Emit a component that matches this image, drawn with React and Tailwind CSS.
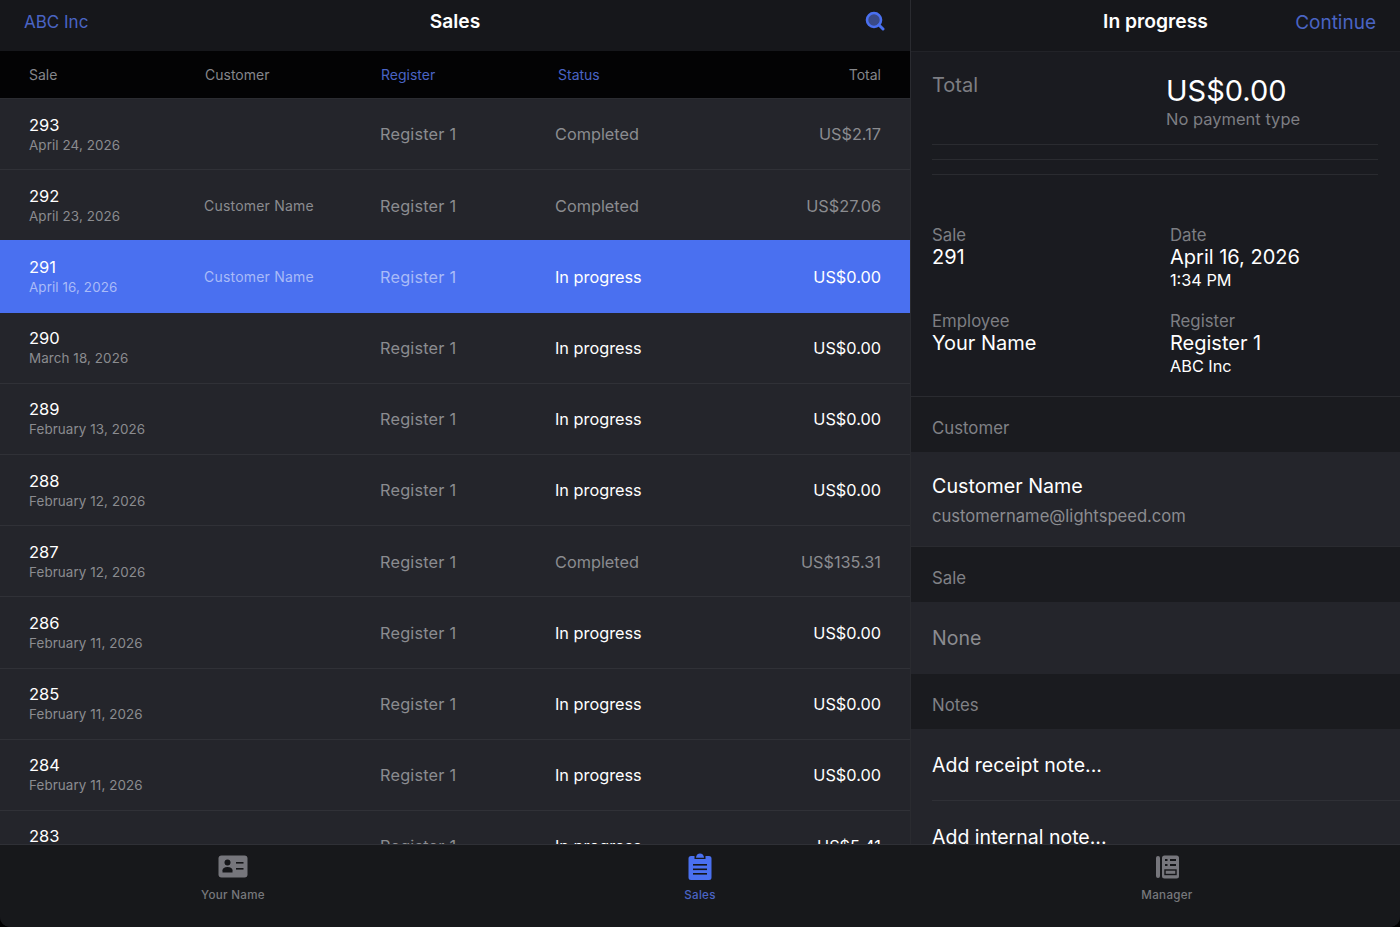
import React from 'react';

const sales = [
  { id: 293, date: 'April 24, 2026', customer: '', status: 'Completed', total: 'US$2.17' },
  { id: 292, date: 'April 23, 2026', customer: 'Customer Name', status: 'Completed', total: 'US$27.06' },
  { id: 291, date: 'April 16, 2026', customer: 'Customer Name', status: 'In progress', total: 'US$0.00', selected: true },
  { id: 290, date: 'March 18, 2026', customer: '', status: 'In progress', total: 'US$0.00' },
  { id: 289, date: 'February 13, 2026', customer: '', status: 'In progress', total: 'US$0.00' },
  { id: 288, date: 'February 12, 2026', customer: '', status: 'In progress', total: 'US$0.00' },
  { id: 287, date: 'February 12, 2026', customer: '', status: 'Completed', total: 'US$135.31' },
  { id: 286, date: 'February 11, 2026', customer: '', status: 'In progress', total: 'US$0.00' },
  { id: 285, date: 'February 11, 2026', customer: '', status: 'In progress', total: 'US$0.00' },
  { id: 284, date: 'February 11, 2026', customer: '', status: 'In progress', total: 'US$0.00' },
  { id: 283, date: 'February 11, 2026', customer: '', status: 'In progress', total: 'US$5.41' },
];

const SearchIcon = () => (
  <svg width="20" height="20" viewBox="0 0 20 20" fill="none">
    <circle cx="9" cy="9" r="7" fill="#3a4a86" stroke="#4a70f0" strokeWidth="2.6" />
    <path d="M14 14l4 4" stroke="#4a70f0" strokeWidth="3" strokeLinecap="round" />
  </svg>
);

const CardIcon = () => (
  <svg width="30" height="23" viewBox="0 0 30 23">
    <rect x="0.5" y="0.5" width="29" height="22" rx="3" fill="#76767c" />
    <circle cx="9.5" cy="7.6" r="3" fill="#141518" />
    <path d="M4.5 17.5v-2.2c0-2 1.8-3.3 5-3.3s5 1.3 5 3.3v2.2z" fill="#141518" />
    <rect x="18" y="7" width="7.5" height="1.6" fill="#141518" />
    <rect x="18" y="13" width="7.5" height="1.6" fill="#141518" />
  </svg>
);

const ClipboardIcon = () => (
  <svg width="24" height="27" viewBox="0 0 24 27">
    <path d="M3 3h3.5v3h11V3H21a2.5 2.5 0 0 1 2.5 2.5v19A2.5 2.5 0 0 1 21 27H3a2.5 2.5 0 0 1-2.5-2.5v-19A2.5 2.5 0 0 1 3 3z" fill="#4a70f0" />
    <path d="M8 4.8C8 2 10 .5 12 .5s4 1.5 4 4.3z" fill="#4a70f0" />
    <rect x="5" y="11" width="14" height="1.6" fill="#15161a" />
    <rect x="5" y="15.5" width="14" height="1.6" fill="#15161a" />
    <rect x="5" y="20" width="14" height="1.6" fill="#15161a" />
  </svg>
);

const ManagerIcon = () => (
  <svg width="23" height="24" viewBox="0 0 23 24">
    <rect x="0" y="1" width="4" height="22" rx="2" fill="#76767c" />
    <rect x="6" y="0.5" width="17" height="23" rx="2.5" fill="#76767c" />
    <rect x="9" y="4" width="2.5" height="2" fill="#141518" />
    <rect x="14" y="4" width="6" height="2" fill="#141518" />
    <rect x="9" y="9" width="2.5" height="2" fill="#141518" />
    <rect x="14" y="9" width="6" height="2" fill="#141518" />
    <rect x="9" y="15" width="11" height="4.5" fill="none" stroke="#141518" strokeWidth="1.4" />
  </svg>
);

const SaleRow = ({ sale }) => {
  const inProgress = sale.status === 'In progress';
  const dim = sale.selected ? 'text-[#a9bbf8]' : 'text-[#8b8c90]';
  const bright = inProgress ? 'text-white' : 'text-[#8b8c90]';
  return (
    <div
      className={`grid grid-cols-[175px_176px_175px_1fr] items-center h-[71.2px] shrink-0 pt-[1px] pl-[29px] pr-[29px] border-b ${
        sale.selected
          ? 'bg-[#4a70f0] border-[#4a70f0] shadow-[0_-1px_0_#4a70f0]'
          : 'bg-[#24252b] border-[#303137]'
      }`}
    >
      <div>
        <div className="text-[16.5px] leading-[20px] text-white">{sale.id}</div>
        <div className={`text-[13.4px] leading-[20px] tracking-[0.1px] ${dim}`}>{sale.date}</div>
      </div>
      <div className={`text-[14px] tracking-[0.2px] ${dim}`}>{sale.customer}</div>
      <div className={`text-[16.3px] tracking-[0.2px] ${dim}`}>Register 1</div>
      <div className="flex justify-between items-center">
        <span className={`text-[16.3px] ${bright}`}>{sale.status}</span>
        <span className={`text-[16.3px] ${bright}`}>{sale.total}</span>
      </div>
    </div>
  );
};

const SectionHead = ({ children }) => (
  <div className="h-[55px] shrink-0 pl-[21px] pt-[21px] text-[16.8px] leading-[20px] text-[#808186] bg-[#1a1b1f]">{children}</div>
);

const Info = ({ label, value, sub }) => (
  <div>
    <div className="text-[16.8px] leading-[20px] text-[#7d7e83]">{label}</div>
    <div className="text-[20px] leading-[25px] text-white">{value}</div>
    {sub && <div className="text-[16.3px] leading-[20px] text-white">{sub}</div>}
  </div>
);

const TabItem = ({ icon, label, active }) => (
  <div className="flex-1 flex flex-col items-center pt-[7px]">
    <div className="h-[29px] flex items-center justify-center">{icon}</div>
    <div className={`mt-[6px] text-[11.6px] leading-[16px] font-medium tracking-[0.3px] ${active ? 'text-[#4a64c4]' : 'text-[#77787d]'}`}>
      {label}
    </div>
  </div>
);

export default function App() {
  return (
    <div className="w-[1400px] h-[927px] bg-black overflow-hidden" style={{ fontFamily: 'Inter, sans-serif' }}>
      <div className="h-full flex flex-col rounded-b-[10px] overflow-hidden bg-[#17181b]">
        <div className="flex h-[844px] shrink-0">
          {/* Sales list */}
          <div className="w-[911px] shrink-0 flex flex-col border-r border-[#2a2b30] overflow-hidden">
            <div className="h-[51px] shrink-0 bg-[#16171b] flex items-center justify-between pl-[24px] pr-[25px] pb-[9px] relative">
              <span className="mt-[4px] text-[17px] text-[#4a64c4]">ABC Inc</span>
              <span className="absolute left-0 right-0 text-center text-[19.2px] font-semibold text-white">Sales</span>
              <SearchIcon />
            </div>
            <div className="h-[48px] shrink-0 bg-[#030304] border-b border-[#2b2c31] grid grid-cols-[176px_176px_177px_1fr] items-center pl-[29px] pr-[29px] text-[14px] text-[#85868b]">
              <span>Sale</span>
              <span>Customer</span>
              <span className="text-[#4a64c4]">Register</span>
              <span className="flex justify-between">
                <span className="text-[#4a64c4]">Status</span>
                <span>Total</span>
              </span>
            </div>
            {sales.map((sale) => (
              <SaleRow key={sale.id} sale={sale} />
            ))}
          </div>

          {/* Sale detail */}
          <div className="flex-1 flex flex-col overflow-hidden bg-[#1a1b20]">
            <div className="h-[52px] shrink-0 bg-[#16171b] border-b border-[#222328] flex items-center justify-end pr-[24px] pb-[9px] relative">
              <span className="absolute left-0 right-0 text-center text-[19.3px] font-semibold text-white">In progress</span>
              <span className="mt-[4px] text-[19px] text-[#4a64c4]">Continue</span>
            </div>
            <div className="pl-[21px] pr-[22px] pt-[20px] shrink-0">
              <div className="h-[73px] grid grid-cols-[234px_1fr] border-b border-[#2a2b30]">
                <div className="text-[20px] leading-[26px] text-[#7d7e83]">Total</div>
                <div>
                  <div className="text-[29px] leading-[37px] text-white">US$0.00</div>
                  <div className="text-[16.5px] leading-[20px] text-[#7d7e83]">No payment type</div>
                </div>
              </div>
              <div className="h-[15px] border-b border-[#2a2b30]" />
              <div className="h-[15px] border-b border-[#2a2b30]" />
            </div>
            <div className="h-[222px] shrink-0 border-b border-[#2a2b30] pl-[21px] pt-[50px]">
              <div className="grid grid-cols-[238px_1fr] gap-y-[21px]">
                <Info label="Sale" value="291" />
                <Info label="Date" value="April 16, 2026" sub="1:34 PM" />
                <Info label="Employee" value="Your Name" />
                <Info label="Register" value="Register 1" sub="ABC Inc" />
              </div>
            </div>
            <SectionHead>Customer</SectionHead>
            <div className="h-[95px] shrink-0 bg-[#24252b] border-b border-[#2a2b30] pl-[21px] pt-[22px]">
              <div className="text-[19.7px] leading-[25px] text-white">Customer Name</div>
              <div className="mt-[7px] text-[16.6px] leading-[20px] text-[#8b8c90]">customername@lightspeed.com</div>
            </div>
            <SectionHead>Sale</SectionHead>
            <div className="h-[72px] shrink-0 bg-[#24252b] flex items-center pl-[21px] pt-[2px] text-[19.5px] text-[#8b8c90]">None</div>
            <SectionHead>Notes</SectionHead>
            <div className="flex-1 bg-[#24252b] pl-[21px]">
              <div className="h-[72px] flex items-center pt-[3px] text-[19.5px] text-white border-b border-[#2f3036]">Add receipt note...</div>
              <div className="h-[71px] flex items-center pt-[3px] text-[19.5px] text-white">Add internal note...</div>
            </div>
          </div>
        </div>

        {/* Tab bar */}
        <div className="flex-1 flex border-t border-[#2f3036] bg-[#17181b]">
          <div className="w-[466px]"><TabItem icon={<CardIcon />} label="Your Name" /></div>
          <div className="w-[468px]"><TabItem icon={<ClipboardIcon />} label="Sales" active /></div>
          <div className="w-[466px]"><TabItem icon={<ManagerIcon />} label="Manager" /></div>
        </div>
      </div>
    </div>
  );
}
